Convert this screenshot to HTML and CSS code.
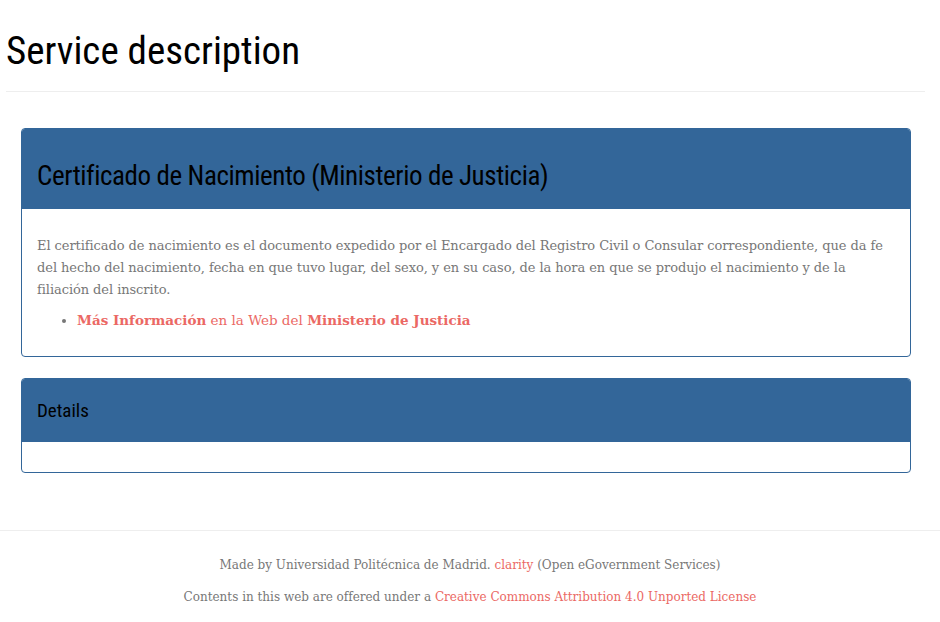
FILE: index.html
```html
<!DOCTYPE html>
<html lang="es">
<head>
<meta charset="utf-8">
<title>Service description</title>
<link rel="stylesheet" href="styles.css">
</head>
<body>
<div class="page-header">
  <h1>Service description</h1>
</div>
<main class="content">
  <section class="panel">
    <div class="panel-heading">
      <h2 class="panel-title">Certificado de Nacimiento (Ministerio de Justicia)</h2>
    </div>
    <div class="panel-body">
      <p>El certificado de nacimiento es el documento expedido por el Encargado del Registro Civil o Consular correspondiente, que da fe del hecho del nacimiento, fecha en que tuvo lugar, del sexo, y en su caso, de la hora en que se produjo el nacimiento y de la filiación del inscrito.</p>
      <ul class="links">
        <li><a href="#"><strong>Más Información</strong> en la Web del <strong>Ministerio de Justicia</strong></a></li>
      </ul>
    </div>
  </section>
  <section class="panel">
    <div class="panel-heading small">
      <h3 class="panel-title small">Details</h3>
    </div>
    <div class="panel-body empty"></div>
  </section>
</main>
<footer class="footer">
  <p>Made by Universidad Politécnica de Madrid. <a href="#">clarity</a> (Open eGovernment Services)</p>
  <p>Contents in this web are offered under a <a href="#">Creative Commons Attribution 4.0 Unported License</a></p>
</footer>
</body>
</html>
```
FILE: styles.css
```css
html, body {
  margin: 0;
  padding: 0;
  background: #ffffff;
}
body {
  font-family: "DejaVu Serif", Georgia, serif;
  font-size: 13px;
  color: #777777;
}
a {
  color: #eb6864;
  text-decoration: none;
}
.page-header {
  margin: 0 15px 0 6px;
  padding: 27px 0 16px;
  border-bottom: 1px solid #eeeeee;
}
.page-header h1 {
  margin: 0;
  font-family: "Roboto Condensed", "Liberation Sans", sans-serif;
  font-weight: normal;
  font-size: 39px;
  line-height: 48px;
  color: #000000;
}
.content {
  margin: 36px 29px 0 21px;
  padding-bottom: 36px;
}
.panel {
  border: 1px solid #336699;
  border-radius: 4px;
  margin-bottom: 21px;
  background: #ffffff;
}
.panel-heading {
  background: #336699;
  border-radius: 3px 3px 0 0;
  padding: 30px 15px 16px;
}
.panel-heading.small {
  padding: 20px 15px 19px;
}
.panel-title {
  margin: 0;
  font-family: "Roboto Condensed", "Liberation Sans", sans-serif;
  font-weight: normal;
  font-size: 27px;
  letter-spacing: -0.4px;
  line-height: 34px;
  color: #000000;
}
.panel-title.small {
  font-size: 19px;
  letter-spacing: 0;
  line-height: 24px;
}
.panel-body {
  padding: 26px 15px 25px;
  line-height: 22px;
}
.panel-body.empty {
  padding: 0;
  height: 30px;
}
.panel-body p {
  margin: 0 0 8px;
  letter-spacing: -0.07px;
}
.links {
  margin: 0;
  padding-left: 40px;
  font-size: 13.5px;
}
.footer {
  border-top: 1px solid #eeeeee;
  padding: 23px 0 10px;
  text-align: center;
  font-size: 12px;
}
.footer p {
  margin: 0 0 10px;
  line-height: 22px;
}
```
